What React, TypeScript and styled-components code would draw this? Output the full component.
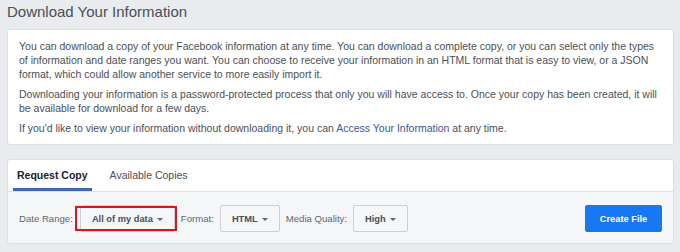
import React from "react";
import styled, { createGlobalStyle } from "styled-components";

const GlobalStyle = createGlobalStyle`
  body {
    margin: 0;
    background: #e9ebee;
    font-family: "Liberation Sans", Arial, Helvetica, sans-serif;
    color: #4b4f56;
  }
`;

const Page = styled.div`
  width: 667px;
  padding: 0 6px 0 7px;
`;

const Title = styled.h1`
  margin: 0;
  height: 29px;
  padding-top: 3px;
  box-sizing: border-box;
  font-size: 15px;
  font-weight: normal;
  color: #4b4f56;
  line-height: 18px;
`;

const Card = styled.div`
  background: #fff;
  border: 1px solid #dddfe2;
  border-radius: 3px;
`;

const InfoCard = styled(Card)`
  padding: 9px 11px 9px;
`;

const Paragraph = styled.p`
  margin: 0 0 6px;
  font-size: 10.5px;
  line-height: 14px;
  color: #4b4f56;

  &:last-child {
    margin-bottom: 0;
  }
`;

const Link = styled.a`
  color: #385898;
  text-decoration: none;
`;

const ActionCard = styled(Card)`
  margin-top: 14px;
  overflow: hidden;
`;

const TabBar = styled.div`
  display: flex;
  gap: 14px;
  height: 31px;
  padding-left: 5px;
  border-bottom: 1px solid #dddfe2;
`;

const Tab = styled.div<{ $active?: boolean }>`
  display: flex;
  align-items: center;
  padding: 2px 4px 0;
  font-size: 10.5px;
  font-weight: ${(p) => (p.$active ? "bold" : "normal")};
  color: ${(p) => (p.$active ? "#1d2129" : "#4b4f56")};
  border-bottom: 3px solid ${(p) => (p.$active ? "#4267b2" : "transparent")};
`;

const Controls = styled.div`
  display: flex;
  align-items: center;
  padding: 13px 11px 11px;
  background: #f5f6f7;
`;

const Label = styled.span`
  font-size: 9.6px;
  color: #606770;
  margin-right: 6px;
`;

const Highlight = styled.div`
  position: relative;
  display: flex;
  margin: 0 6px 0 1px;

  &::after {
    content: "";
    position: absolute;
    top: 1px;
    bottom: 1px;
    left: -5px;
    right: -2px;
    border: 2px solid #e0141e;
    pointer-events: none;
  }
`;

const SelectButton = styled.button<{ $gap?: number }>`
  display: flex;
  align-items: center;
  gap: 4px;
  height: 27px;
  padding: 0 11px;
  margin-right: ${(p) => (p.$gap ?? 6)}px;
  background: #f5f6f7;
  border: 1px solid #ccd0d5;
  border-radius: 2px;
  font-family: inherit;
  font-size: 9.3px;
  font-weight: bold;
  color: #4b4f56;
`;

const Caret = styled.span`
  width: 0;
  height: 0;
  border-left: 3px solid transparent;
  border-right: 3px solid transparent;
  border-top: 3.5px solid #606770;
  margin-top: 1px;
`;

const CreateButton = styled.button`
  margin-left: auto;
  height: 27px;
  width: 77px;
  background: #1877f2;
  border: 1px solid #1877f2;
  border-radius: 2px;
  color: #fff;
  font-family: inherit;
  font-size: 9.3px;
  font-weight: bold;
`;

export default function App() {
  return (
    <Page>
      <GlobalStyle />
      <Title>Download Your Information</Title>
      <InfoCard>
        <Paragraph>
          You can download a copy of your Facebook information at any time. You can download a complete copy, or you can
          select only the types of information and date ranges you want. You can choose to receive your information in an
          HTML format that is easy to view, or a JSON format, which could allow another service to more easily import it.
        </Paragraph>
        <Paragraph>
          Downloading your information is a password-protected process that only you will have access to. Once your copy
          has been created, it will be available for download for a few days.
        </Paragraph>
        <Paragraph>
          If you'd like to view your information without downloading it, you can <Link>Access Your Information</Link> at
          any time.
        </Paragraph>
      </InfoCard>
      <ActionCard>
        <TabBar>
          <Tab $active>Request Copy</Tab>
          <Tab>Available Copies</Tab>
        </TabBar>
        <Controls>
          <Label>Date Range:</Label>
          <Highlight>
            <SelectButton $gap={0}>
              All of my data <Caret />
            </SelectButton>
          </Highlight>
          <Label>Format:</Label>
          <SelectButton>
            HTML <Caret />
          </SelectButton>
          <Label>Media Quality:</Label>
          <SelectButton>
            High <Caret />
          </SelectButton>
          <CreateButton>Create File</CreateButton>
        </Controls>
      </ActionCard>
    </Page>
  );
}
